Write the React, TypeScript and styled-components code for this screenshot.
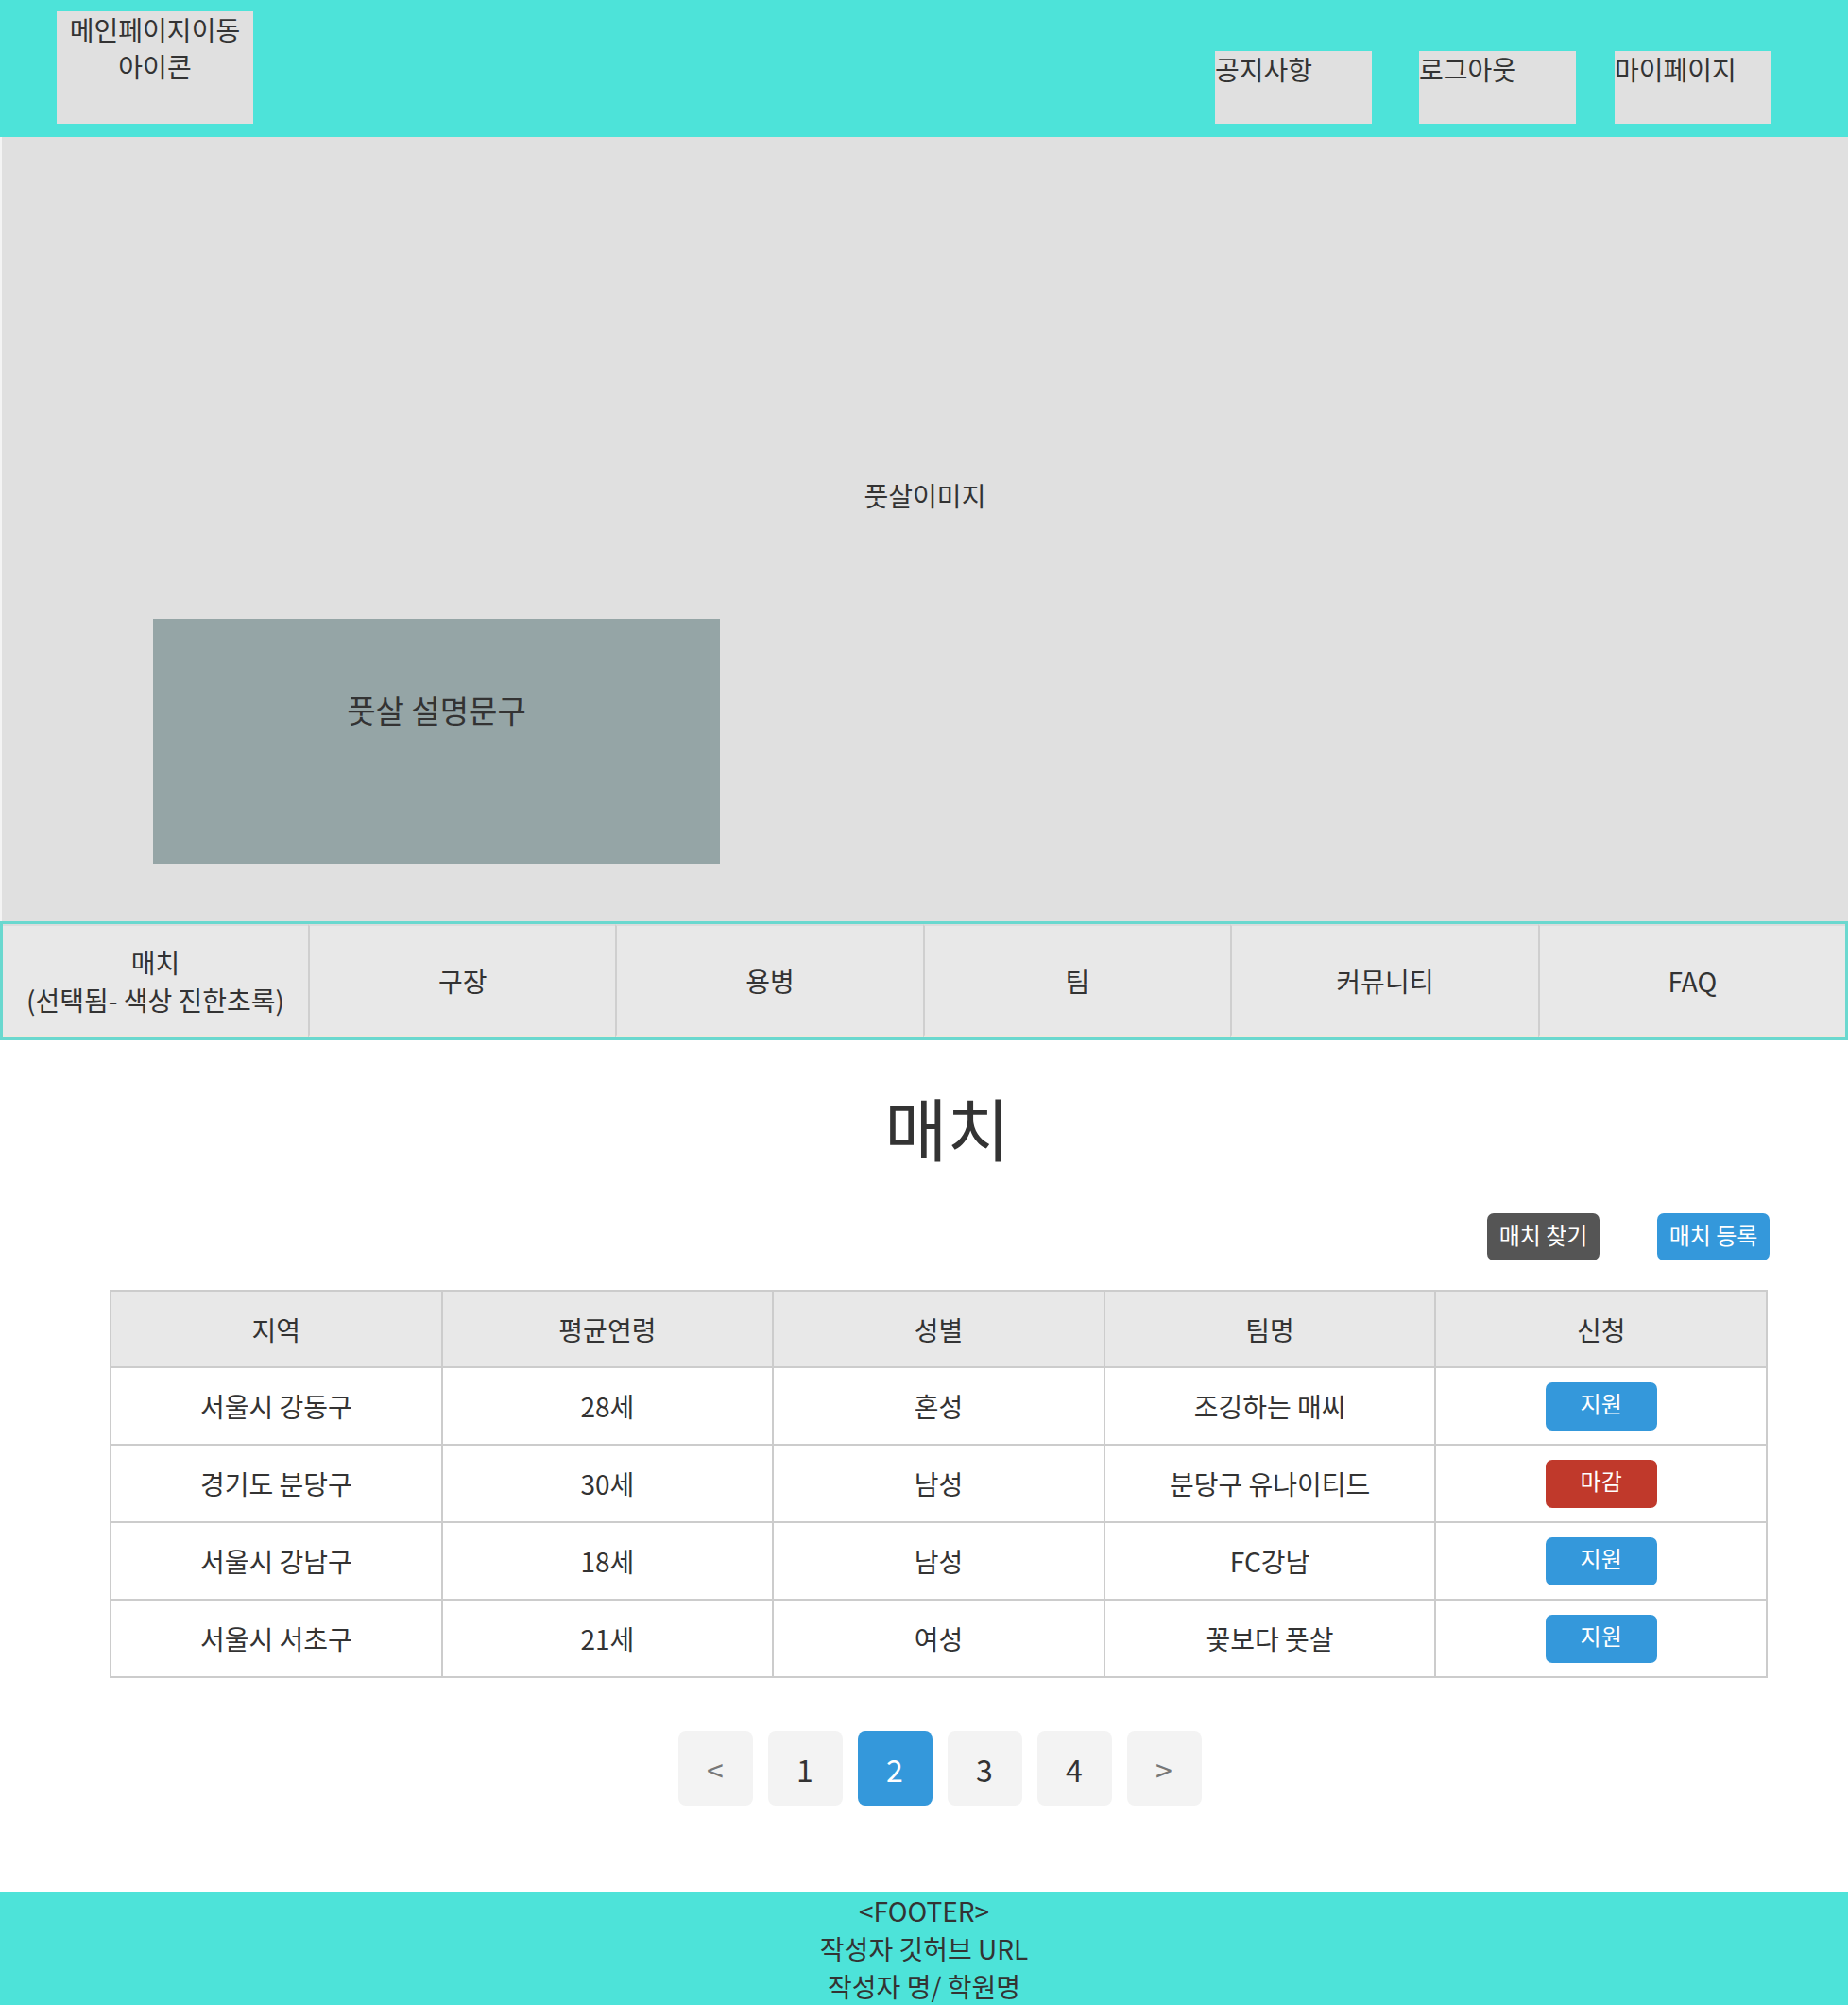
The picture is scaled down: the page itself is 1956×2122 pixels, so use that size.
import styled, { createGlobalStyle } from "styled-components";

const GlobalStyle = createGlobalStyle`
    body {
        margin: 0;
        background: #fff;
        font-family: "Noto Sans CJK KR", "Noto Sans", sans-serif;
        color: #333;
    }
`;

const Header = styled.header`
    height: 145px;
    background: #4de3d9;
    display: flex;
    align-items: flex-end;
    justify-content: space-between;
    padding: 0 81px 14px 60px;
    box-sizing: border-box;
`;

const Logo = styled.div`
    width: 208px;
    height: 119px;
    background: #e0e0e0;
    text-align: center;
    font-size: 28px;
    line-height: 39px;
`;

const NavGroup = styled.nav`
    display: flex;
    gap: 41px;
`;

const NavButton = styled.div<{ $extra?: number }>`
    width: 166px;
    height: 77px;
    margin-right: ${(p) => p.$extra ?? 0}px;
    background: #e0e0e0;
    font-size: 28px;
    line-height: 38px;
`;

const Hero = styled.section`
    height: 830px;
    background: #e0e0e0;
    border-left: 2px solid #f4f4f4;
    box-sizing: border-box;
    padding-top: 359px;
`;

const HeroCaption = styled.div`
    text-align: center;
    font-size: 28px;
    line-height: 40px;
`;

const DescBox = styled.div`
    width: 600px;
    height: 259px;
    margin: 111px 0 0 160px;
    background: #95a5a6;
    box-sizing: border-box;
    padding-top: 72px;
    text-align: center;
    font-size: 33px;
    line-height: 48px;
`;

const Tabs = styled.div`
    display: grid;
    grid-template-columns: 323px repeat(5, 1fr);
    height: 126px;
    border: 3px solid #6ad8cf;
    box-sizing: border-box;
    background: #e8e8e8;
`;

const Tab = styled.div<{ $first?: boolean }>`
    display: flex;
    align-items: center;
    justify-content: center;
    text-align: center;
    font-size: 28px;
    line-height: 40px;
    border-left: ${(p) => (p.$first ? "none" : "2px solid #cfcfcf")};
    border-top: 2px solid #dcdcdc;
    border-bottom: 3px solid #ede8e0;
`;

const Main = styled.main`
    height: 901px;
    box-sizing: border-box;
    padding: 47px 83px 0 116px;
`;

const Title = styled.h1`
    margin: 0;
    padding-left: 16px;
    text-align: center;
    font-size: 72px;
    font-weight: 400;
    line-height: 88px;
`;

const Actions = styled.div`
    display: flex;
    justify-content: flex-end;
    gap: 61px;
    margin-top: 48px;
`;

const ActionButton = styled.button<{ $color: string }>`
    width: 119px;
    height: 50px;
    border: none;
    border-radius: 7px;
    background: ${(p) => p.$color};
    color: #fff;
    font-family: inherit;
    font-size: 24px;
    padding: 0 0 6px;
`;

const Table = styled.table`
    width: 1755px;
    margin-top: 31px;
    border-collapse: collapse;
    table-layout: fixed;
    border: 2px solid #cccccc;
`;

const Th = styled.th`
    height: 79px;
    padding: 0;
    background: #e8e8e8;
    border: 2px solid #cccccc;
    font-size: 28px;
    font-weight: 400;
    color: #333;
`;

const Td = styled.td`
    height: 80px;
    padding: 0;
    border: 2px solid #cccccc;
    text-align: center;
    font-size: 28px;
    color: #333;
`;

const StatusButton = styled.button<{ $closed?: boolean }>`
    width: 118px;
    height: 51px;
    border: none;
    border-radius: 7px;
    background: ${(p) => (p.$closed ? "#c0392b" : "#3498db")};
    color: #fff;
    font-family: inherit;
    font-size: 24px;
    padding: 0 0 8px;
`;

const Pager = styled.div`
    display: flex;
    justify-content: center;
    gap: 16px;
    margin-top: 56px;
`;

const PageBox = styled.div<{ $active?: boolean; $muted?: boolean }>`
    width: 79px;
    height: 79px;
    border-radius: 8px;
    display: flex;
    align-items: center;
    justify-content: center;
    font-size: 32px;
    background: ${(p) => (p.$active ? "#3498db" : "#f3f3f3")};
    color: ${(p) => (p.$active ? "#fff" : p.$muted ? "#777" : "#333")};
`;

const Footer = styled.footer`
    height: 120px;
    background: #4de3d9;
    text-align: center;
    font-size: 28px;
    line-height: 40px;
`;

const rows = [
    { area: "서울시 강동구", age: "28세", gender: "혼성", team: "조깅하는 매씨", closed: false },
    { area: "경기도 분당구", age: "30세", gender: "남성", team: "분당구 유나이티드", closed: true },
    { area: "서울시 강남구", age: "18세", gender: "남성", team: "FC강남", closed: false },
    { area: "서울시 서초구", age: "21세", gender: "여성", team: "꽃보다 풋살", closed: false },
];

const tabs = ["구장", "용병", "팀", "커뮤니티", "FAQ"];

export default function App() {
    return (
        <>
            <GlobalStyle />
            <Header>
                <Logo>
                    메인페이지이동
                    <br />
                    아이콘
                </Logo>
                <NavGroup>
                    <NavButton $extra={9}>공지사항</NavButton>
                    <NavButton>로그아웃</NavButton>
                    <NavButton>마이페이지</NavButton>
                </NavGroup>
            </Header>
            <Hero>
                <HeroCaption>풋살이미지</HeroCaption>
                <DescBox>풋살 설명문구</DescBox>
            </Hero>
            <Tabs>
                <Tab $first>
                    매치
                    <br />
                    (선택됨- 색상 진한초록)
                </Tab>
                {tabs.map((t) => (
                    <Tab key={t}>{t}</Tab>
                ))}
            </Tabs>
            <Main>
                <Title>매치</Title>
                <Actions>
                    <ActionButton $color="#555555">매치 찾기</ActionButton>
                    <ActionButton $color="#3498db">매치 등록</ActionButton>
                </Actions>
                <Table>
                    <thead>
                        <tr>
                            <Th>지역</Th>
                            <Th>평균연령</Th>
                            <Th>성별</Th>
                            <Th>팀명</Th>
                            <Th>신청</Th>
                        </tr>
                    </thead>
                    <tbody>
                        {rows.map((r) => (
                            <tr key={r.team}>
                                <Td>{r.area}</Td>
                                <Td>{r.age}</Td>
                                <Td>{r.gender}</Td>
                                <Td>{r.team}</Td>
                                <Td>
                                    <StatusButton $closed={r.closed}>
                                        {r.closed ? "마감" : "지원"}
                                    </StatusButton>
                                </Td>
                            </tr>
                        ))}
                    </tbody>
                </Table>
                <Pager>
                    <PageBox $muted>&lt;</PageBox>
                    <PageBox>1</PageBox>
                    <PageBox $active>2</PageBox>
                    <PageBox>3</PageBox>
                    <PageBox>4</PageBox>
                    <PageBox $muted>&gt;</PageBox>
                </Pager>
            </Main>
            <Footer>
                &lt;FOOTER&gt;
                <br />
                작성자 깃허브 URL
                <br />
                작성자 명/ 학원명
            </Footer>
        </>
    );
}
